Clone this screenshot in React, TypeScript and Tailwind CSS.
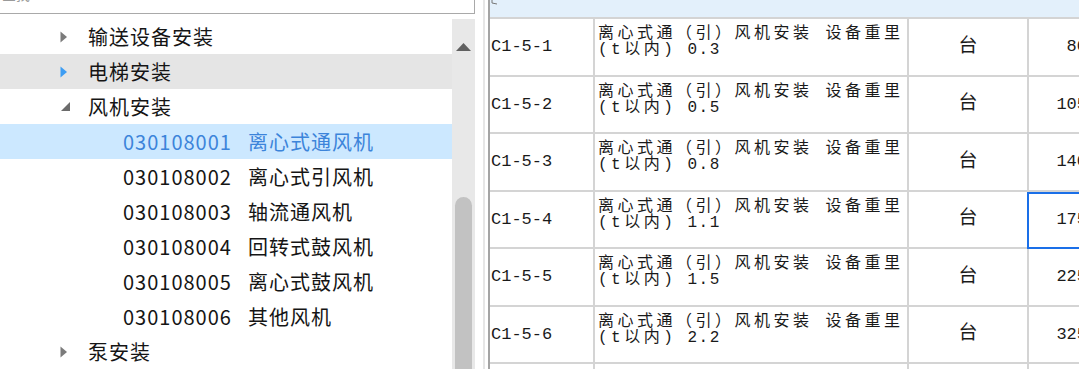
import React from "react";

type TreeRow = {
  level: 1 | 2;
  code?: string;
  label: string;
  arrow?: "right" | "down";
  state?: "hover" | "selected";
};

const TREE: TreeRow[] = [
  { level: 1, label: "输送设备安装", arrow: "right" },
  { level: 1, label: "电梯安装", arrow: "right", state: "hover" },
  { level: 1, label: "风机安装", arrow: "down" },
  { level: 2, code: "030108001", label: "离心式通风机", state: "selected" },
  { level: 2, code: "030108002", label: "离心式引风机" },
  { level: 2, code: "030108003", label: "轴流通风机" },
  { level: 2, code: "030108004", label: "回转式鼓风机" },
  { level: 2, code: "030108005", label: "离心式鼓风机" },
  { level: 2, code: "030108006", label: "其他风机" },
  { level: 1, label: "泵安装", arrow: "right" },
];

const ROWS = [
  { code: "C1-5-1", w: "0.3", qty: "80" },
  { code: "C1-5-2", w: "0.5", qty: "105" },
  { code: "C1-5-3", w: "0.8", qty: "140" },
  { code: "C1-5-4", w: "1.1", qty: "175", active: true },
  { code: "C1-5-5", w: "1.5", qty: "225" },
  { code: "C1-5-6", w: "2.2", qty: "325" },
  { code: "C1-5-7", w: "3", qty: "400" },
];

function Arrow({ kind, blue }: { kind: "right" | "down"; blue?: boolean }) {
  if (kind === "down") {
    return (
      <svg width="11" height="11" viewBox="0 0 11 11">
        <polygon points="10,1 10,10 1,10" fill="#6b6b6b" />
      </svg>
    );
  }
  return (
    <svg width="8" height="12" viewBox="0 0 8 12">
      <polygon points="0.5,0.5 7,6 0.5,11.5" fill={blue ? "#3d9df3" : "#7b7b7b"} />
    </svg>
  );
}

function TreeItem({ row }: { row: TreeRow }) {
  const bg =
    row.state === "selected"
      ? "bg-[#cce8ff]"
      : row.state === "hover"
        ? "bg-[#e5e5e5]"
        : "";
  const color = row.state === "selected" ? "text-[#3c84da]" : "text-[#151515]";

  return (
    <div className={`h-[35px] flex items-center shrink-0 ${bg} ${color}`}>
      {row.level === 1 ? (
        <>
          <div className="w-[88px] pl-[60px] flex items-center">
            {row.arrow && <Arrow kind={row.arrow} blue={row.state === "hover"} />}
          </div>
          <span>{row.label}</span>
        </>
      ) : (
        <>
          <span className="pl-[123px] w-[248px]">{row.code}</span>
          <span>{row.label}</span>
        </>
      )}
    </div>
  );
}

export default function App() {
  return (
    <div className="w-[1079px] h-[369px] overflow-hidden bg-white flex">
      {/* 左侧树 */}
      <div className="w-[475px] shrink-0 flex flex-col font-['Noto_Sans_CJK_SC',sans-serif] text-[20px] tracking-[1px] leading-[35px]">
        <div className="h-[14px] shrink-0 border-b border-r border-[#a9a9a9] overflow-hidden">
          <span className="block -mt-[16px] pl-[2px] text-[14px] leading-[20px] text-[#9a9a9a] tracking-normal">
            查找
          </span>
        </div>
        <div className="h-[5px] shrink-0" />
        <div className="flex flex-1 min-h-0">
          <div className="w-[452px] flex flex-col overflow-hidden">
            {TREE.map((r, i) => (
              <TreeItem key={i} row={r} />
            ))}
          </div>
          <div className="w-[23px] bg-[#e8e8e8] flex flex-col items-center">
            <svg width="15" height="8" viewBox="0 0 15 8" className="mt-[24px] shrink-0">
              <polygon points="7.5,0 15,8 0,8" fill="#606060" />
            </svg>
            <div className="mt-[146px] w-[17px] flex-1 bg-[#c2c2c2] rounded-t-full" />
          </div>
        </div>
      </div>

      {/* 分隔 */}
      <div className="w-[8px] shrink-0" />
      <div className="w-[2px] shrink-0 bg-[#e6e6e6]" />
      <div className="w-[3px] shrink-0" />

      {/* 右侧表格 */}
      <div className="flex-1 min-w-0 border-l-2 border-[#a4a4a4] flex flex-col font-['Liberation_Mono','Noto_Sans_CJK_SC',monospace] text-[17px] text-[#1a1a1a]">
        <div className="h-[19px] shrink-0 bg-[#e3f0fb] border-b-2 border-[#d4d4d4] relative">
          <svg width="8" height="5" viewBox="0 0 8 5" className="absolute left-[1px] top-0">
            <path d="M1 0 L1 3 L6 4" stroke="#777" strokeWidth="1" fill="none" />
          </svg>
        </div>
        {ROWS.map((r) => (
          <div
            key={r.code}
            className="h-[57.5px] shrink-0 flex border-b-2 border-[#d4d4d4]"
          >
            <div className="w-[105px] shrink-0 border-r-2 border-[#d4d4d4] flex items-center pl-[1px]">
              {r.code}
            </div>
            <div className="w-[314px] shrink-0 border-r-2 border-[#d4d4d4] pl-[3px] pt-[7px] text-[16px] leading-[16px] tracking-[3.5px] whitespace-nowrap overflow-hidden">
              <div>离心式通（引）风机安装 设备重里</div>
              <div>
                (t以内)<span className="tracking-[1.5px]"> {r.w}</span>
              </div>
            </div>
            <div className="w-[120px] shrink-0 border-r-2 border-[#d4d4d4] flex items-center justify-center text-[19px]">
              台
            </div>
            <div className="w-[100px] shrink-0 relative flex items-center justify-end pr-[42px]">
              {r.qty}
              {r.active && (
                <div className="absolute -left-[2px] top-0 -bottom-[2px] right-0 border-2 border-[#1a6fe8]" />
              )}
            </div>
          </div>
        ))}
      </div>
    </div>
  );
}
